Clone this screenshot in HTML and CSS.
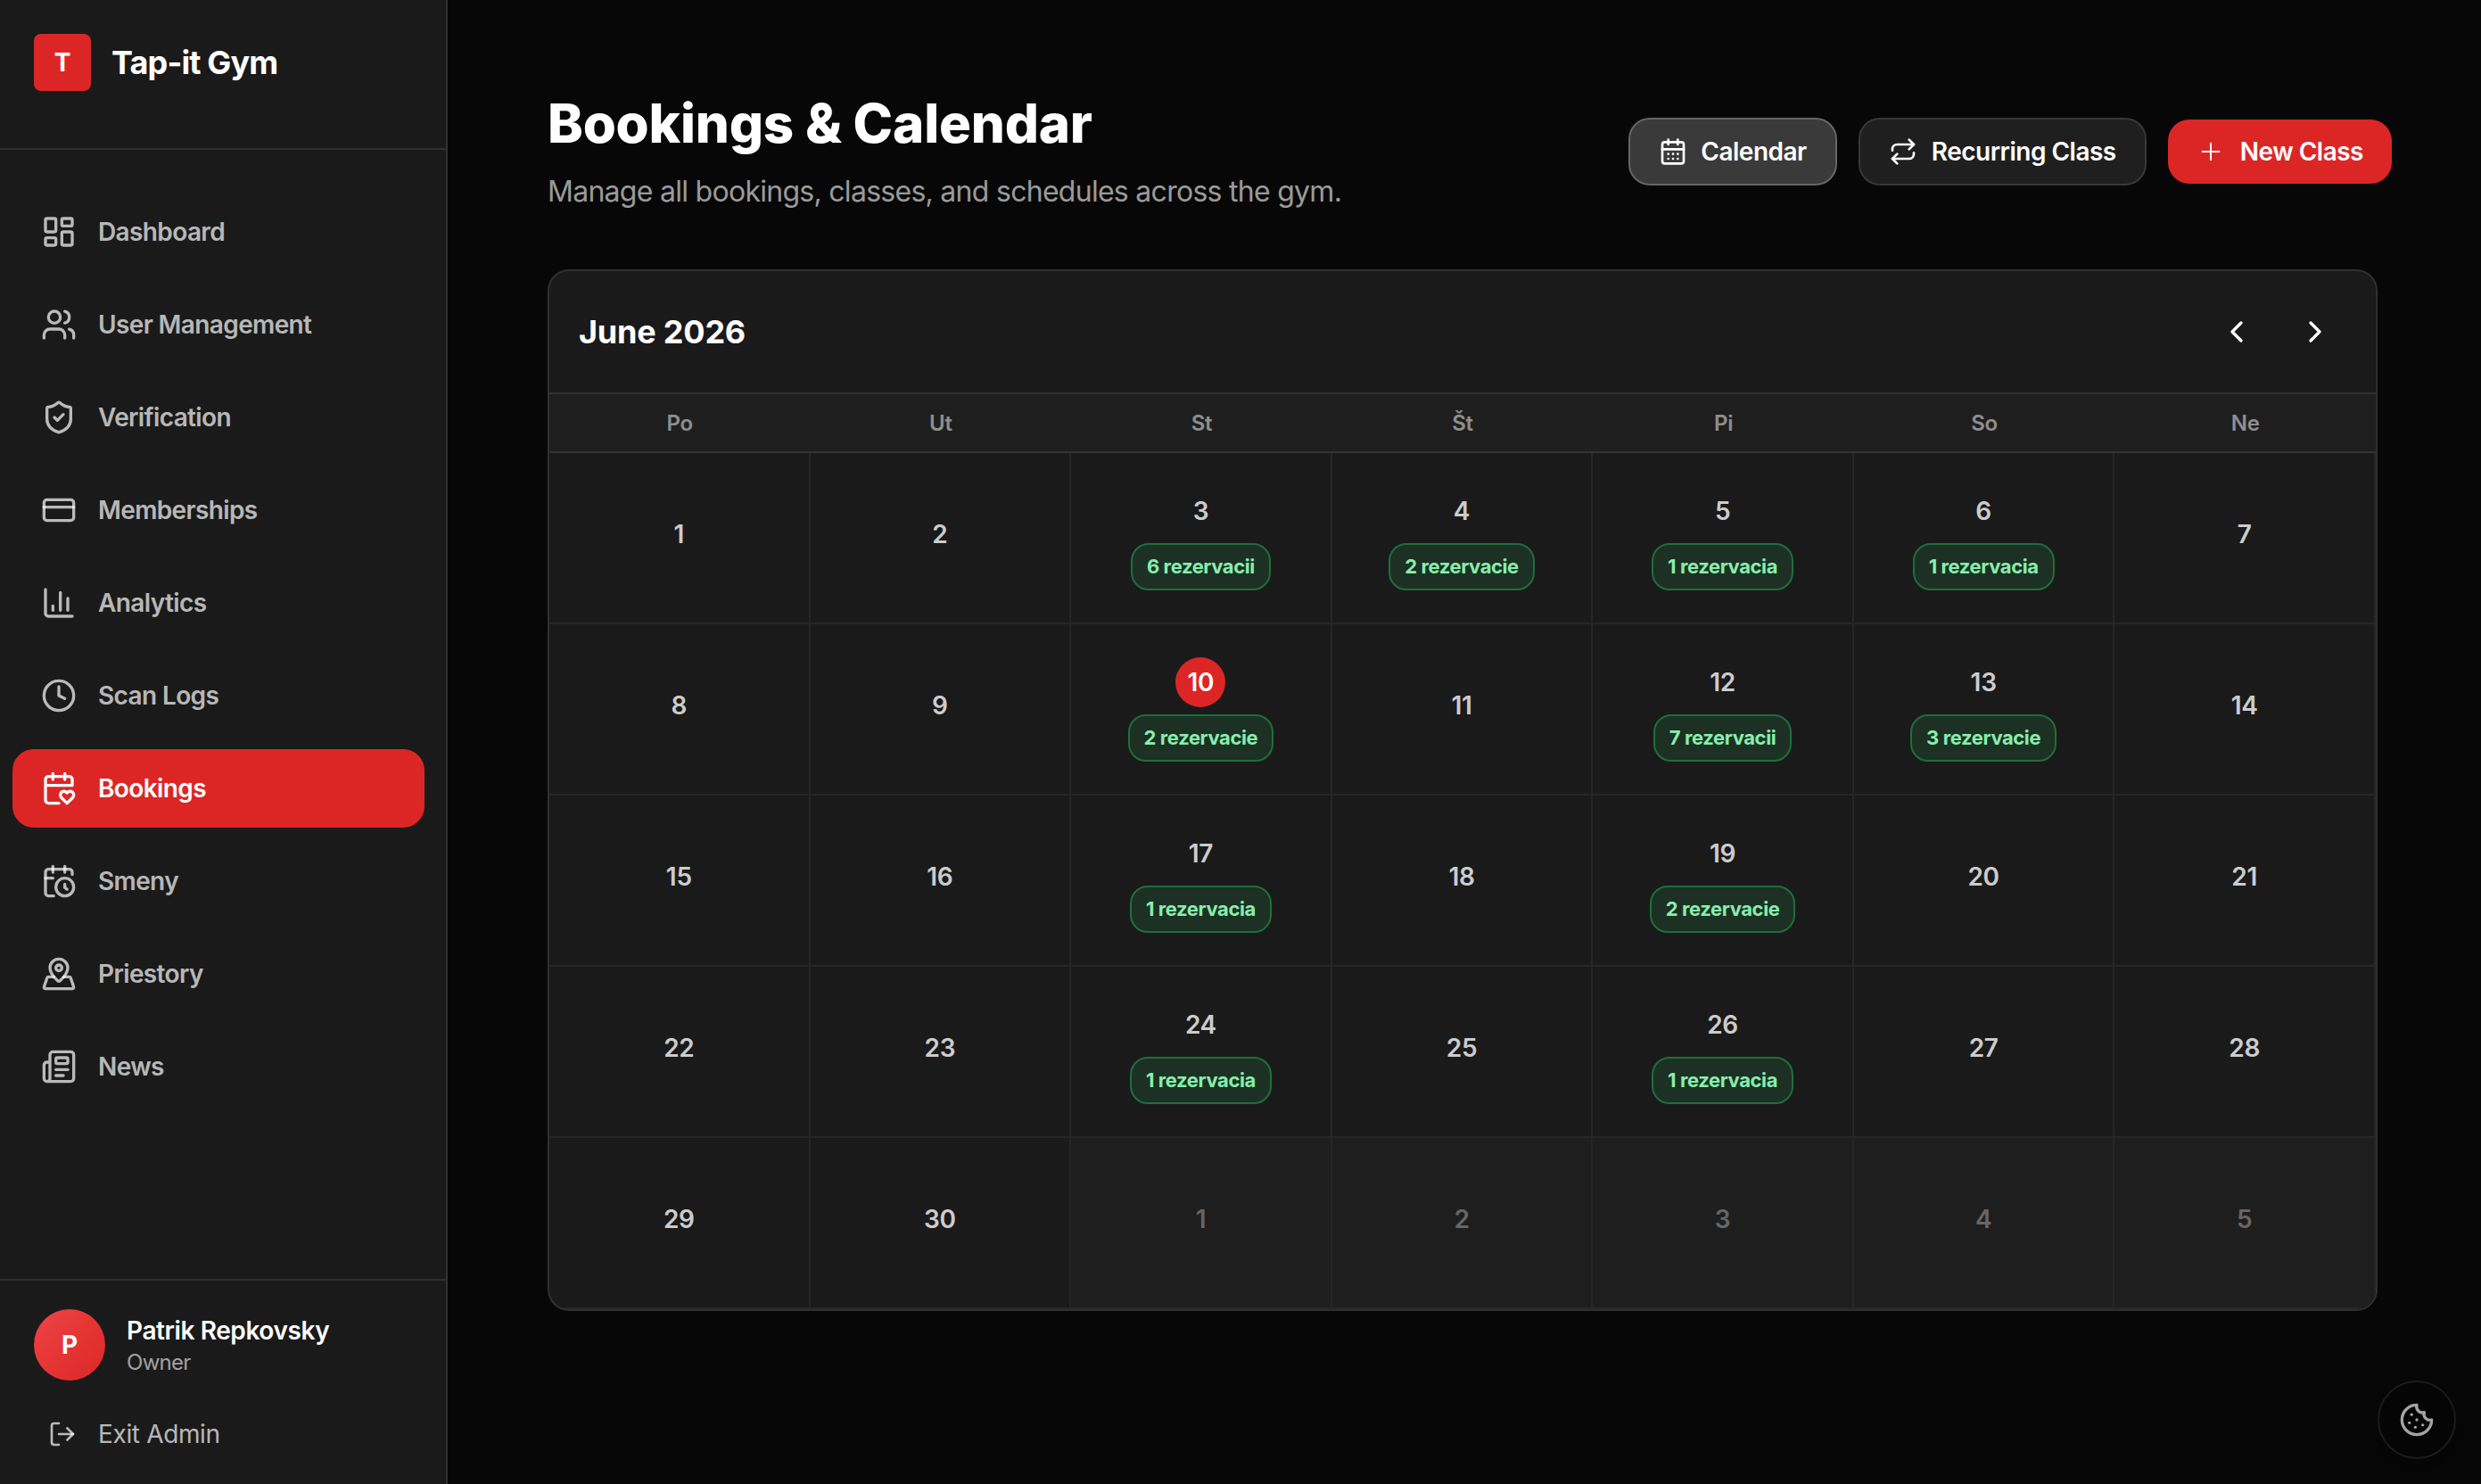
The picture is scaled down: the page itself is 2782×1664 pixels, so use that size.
FILE: index.html
```html
<!DOCTYPE html>
<html lang="sk">
<head>
    <meta charset="UTF-8">
    <meta name="viewport" content="width=device-width, initial-scale=1.0">
    <title>Bookings &amp; Calendar - Tap-it Gym</title>
    <link rel="stylesheet" href="styles.css">
</head>
<body>
    <aside class="sidebar">
        <div class="brand">
            <div class="brand-logo">T</div>
            <span class="brand-name">Tap-it Gym</span>
        </div>

        <nav class="nav">
            <a class="nav-item">
                <svg class="icon" viewBox="0 0 24 24"><rect x="3" y="3" width="7" height="9" rx="1"/><rect x="14" y="3" width="7" height="5" rx="1"/><rect x="14" y="12" width="7" height="9" rx="1"/><rect x="3" y="16" width="7" height="5" rx="1"/></svg>
                <span>Dashboard</span>
            </a>
            <a class="nav-item">
                <svg class="icon" viewBox="0 0 24 24"><path d="M16 21v-2a4 4 0 0 0-4-4H6a4 4 0 0 0-4 4v2"/><circle cx="9" cy="7" r="4"/><path d="M22 21v-2a4 4 0 0 0-3-3.87"/><path d="M16 3.13a4 4 0 0 1 0 7.75"/></svg>
                <span>User Management</span>
            </a>
            <a class="nav-item">
                <svg class="icon" viewBox="0 0 24 24"><path d="M20 13c0 5-3.5 7.5-7.66 8.95a1 1 0 0 1-.67-.01C7.5 20.5 4 18 4 13V6a1 1 0 0 1 1-1c2 0 4.5-1.2 6.24-2.72a1.17 1.17 0 0 1 1.52 0C14.51 3.81 17 5 19 5a1 1 0 0 1 1 1z"/><path d="m9 12 2 2 4-4"/></svg>
                <span>Verification</span>
            </a>
            <a class="nav-item">
                <svg class="icon" viewBox="0 0 24 24"><rect x="2" y="5" width="20" height="14" rx="2"/><path d="M2 10h20"/></svg>
                <span>Memberships</span>
            </a>
            <a class="nav-item">
                <svg class="icon" viewBox="0 0 24 24"><path d="M3 3v16a2 2 0 0 0 2 2h16"/><path d="M18 17V9"/><path d="M13 17V5"/><path d="M8 17v-3"/></svg>
                <span>Analytics</span>
            </a>
            <a class="nav-item">
                <svg class="icon" viewBox="0 0 24 24"><circle cx="12" cy="12" r="10"/><path d="M12 6v6l4 2"/></svg>
                <span>Scan Logs</span>
            </a>
            <a class="nav-item active">
                <svg class="icon" viewBox="0 0 24 24"><path d="M3 10h18V6a2 2 0 0 0-2-2H5a2 2 0 0 0-2 2v14c0 1.1.9 2 2 2h7"/><path d="M8 2v4"/><path d="M16 2v4"/><path d="M21.29 14.7a2.43 2.43 0 0 0-2.65-.52c-.3.12-.57.3-.8.53l-.34.34-.35-.34a2.43 2.43 0 0 0-2.65-.53c-.3.12-.56.3-.79.53-.95.94-1 2.53.2 3.74L17.5 22l3.6-3.55c1.2-1.21 1.14-2.8.19-3.74Z"/></svg>
                <span>Bookings</span>
            </a>
            <a class="nav-item">
                <svg class="icon" viewBox="0 0 24 24"><path d="M21 7.5V6a2 2 0 0 0-2-2H5a2 2 0 0 0-2 2v14a2 2 0 0 0 2 2h3.5"/><path d="M16 2v4"/><path d="M8 2v4"/><path d="M3 10h5"/><path d="M17.5 17.5 16 16.3V14"/><circle cx="16" cy="16" r="6"/></svg>
                <span>Smeny</span>
            </a>
            <a class="nav-item">
                <svg class="icon" viewBox="0 0 24 24"><path d="M18 8c0 3.613-3.869 7.429-5.393 8.795a1 1 0 0 1-1.214 0C9.87 15.429 6 11.613 6 8a6 6 0 0 1 12 0"/><circle cx="12" cy="8" r="2"/><path d="M8.714 14h-3.71a1 1 0 0 0-.948.683l-2.004 6A1 1 0 0 0 3 22h18a1 1 0 0 0 .948-1.316l-2-6a1 1 0 0 0-.949-.684h-3.712"/></svg>
                <span>Priestory</span>
            </a>
            <a class="nav-item">
                <svg class="icon" viewBox="0 0 24 24"><path d="M15 18h-5"/><path d="M18 14h-8"/><path d="M4 22h16a2 2 0 0 0 2-2V4a2 2 0 0 0-2-2H8a2 2 0 0 0-2 2v16a2 2 0 0 1-4 0v-9a2 2 0 0 1 2-2h2"/><rect x="10" y="6" width="8" height="4" rx="1"/></svg>
                <span>News</span>
            </a>
        </nav>

        <div class="sidebar-footer">
            <div class="user">
                <div class="avatar">P</div>
                <div class="user-info">
                    <span class="user-name">Patrik Repkovsky</span>
                    <span class="user-role">Owner</span>
                </div>
            </div>
            <a class="exit">
                <svg class="icon icon-sm" viewBox="0 0 24 24"><path d="M9 21H5a2 2 0 0 1-2-2V5a2 2 0 0 1 2-2h4"/><path d="m16 17 5-5-5-5"/><path d="M21 12H9"/></svg>
                <span>Exit Admin</span>
            </a>
        </div>
    </aside>

    <main class="main">
        <header class="page-header">
            <div>
                <h1 class="page-title">Bookings &amp; Calendar</h1>
                <p class="page-subtitle">Manage all bookings, classes, and schedules across the gym.</p>
            </div>
            <div class="actions">
                <button class="btn btn-active">
                    <svg class="icon icon-sm" viewBox="0 0 24 24"><path d="M8 2v4"/><path d="M16 2v4"/><rect x="3" y="4" width="18" height="18" rx="2"/><path d="M3 10h18"/><path d="M8 14h.01M12 14h.01M16 14h.01M8 18h.01M12 18h.01M16 18h.01"/></svg>
                    <span>Calendar</span>
                </button>
                <button class="btn">
                    <svg class="icon icon-sm" viewBox="0 0 24 24"><path d="m17 2 4 4-4 4"/><path d="M3 11v-1a4 4 0 0 1 4-4h14"/><path d="m7 22-4-4 4-4"/><path d="M21 13v1a4 4 0 0 1-4 4H3"/></svg>
                    <span>Recurring Class</span>
                </button>
                <button class="btn btn-primary">
                    <svg class="icon icon-sm" viewBox="0 0 24 24"><path d="M5 12h14"/><path d="M12 5v14"/></svg>
                    <span>New Class</span>
                </button>
            </div>
        </header>

        <section class="calendar">
            <div class="calendar-header">
                <h2 class="calendar-month">June 2026</h2>
                <div class="calendar-nav">
                    <button class="nav-btn"><svg class="icon" viewBox="0 0 24 24"><path d="m15 18-6-6 6-6"/></svg></button>
                    <button class="nav-btn"><svg class="icon" viewBox="0 0 24 24"><path d="m9 18 6-6-6-6"/></svg></button>
                </div>
            </div>

            <div class="weekdays">
                <span>Po</span><span>Ut</span><span>St</span><span>Št</span><span>Pi</span><span>So</span><span>Ne</span>
            </div>

            <div class="days">
                <div class="day"><span class="num">1</span></div>
                <div class="day"><span class="num">2</span></div>
                <div class="day"><span class="num">3</span><span class="badge">6 rezervacii</span></div>
                <div class="day"><span class="num">4</span><span class="badge">2 rezervacie</span></div>
                <div class="day"><span class="num">5</span><span class="badge">1 rezervacia</span></div>
                <div class="day"><span class="num">6</span><span class="badge">1 rezervacia</span></div>
                <div class="day"><span class="num">7</span></div>

                <div class="day"><span class="num">8</span></div>
                <div class="day"><span class="num">9</span></div>
                <div class="day today"><span class="num">10</span><span class="badge">2 rezervacie</span></div>
                <div class="day"><span class="num">11</span></div>
                <div class="day"><span class="num">12</span><span class="badge">7 rezervacii</span></div>
                <div class="day"><span class="num">13</span><span class="badge">3 rezervacie</span></div>
                <div class="day"><span class="num">14</span></div>

                <div class="day"><span class="num">15</span></div>
                <div class="day"><span class="num">16</span></div>
                <div class="day"><span class="num">17</span><span class="badge">1 rezervacia</span></div>
                <div class="day"><span class="num">18</span></div>
                <div class="day"><span class="num">19</span><span class="badge">2 rezervacie</span></div>
                <div class="day"><span class="num">20</span></div>
                <div class="day"><span class="num">21</span></div>

                <div class="day"><span class="num">22</span></div>
                <div class="day"><span class="num">23</span></div>
                <div class="day"><span class="num">24</span><span class="badge">1 rezervacia</span></div>
                <div class="day"><span class="num">25</span></div>
                <div class="day"><span class="num">26</span><span class="badge">1 rezervacia</span></div>
                <div class="day"><span class="num">27</span></div>
                <div class="day"><span class="num">28</span></div>

                <div class="day"><span class="num">29</span></div>
                <div class="day"><span class="num">30</span></div>
                <div class="day other"><span class="num">1</span></div>
                <div class="day other"><span class="num">2</span></div>
                <div class="day other"><span class="num">3</span></div>
                <div class="day other"><span class="num">4</span></div>
                <div class="day other"><span class="num">5</span></div>
            </div>
        </section>
    </main>

    <button class="cookie-btn">
        <svg class="icon" viewBox="0 0 24 24"><path d="M12 2a10 10 0 1 0 10 10 4 4 0 0 1-5-5 4 4 0 0 1-5-5"/><path d="M8.5 8.5v.01"/><path d="M16 15.5v.01"/><path d="M12 12v.01"/><path d="M11 17v.01"/><path d="M7 14v.01"/></svg>
    </button>
</body>
</html>
```
FILE: styles.css
```css
* {
    box-sizing: border-box;
}
body {
    margin: 0;
    height: 100vh;
    display: flex;
    overflow: hidden;
    background: #070707;
    color: #fff;
    font-family: Inter, "Liberation Sans", sans-serif;
    font-size: 28px;
}
h1, h2, p {
    margin: 0;
}
button {
    font: inherit;
    color: inherit;
    background: none;
    border: none;
    padding: 0;
}
.icon {
    width: 40px;
    height: 40px;
    flex-shrink: 0;
    fill: none;
    stroke: currentColor;
    stroke-width: 2;
    stroke-linecap: round;
    stroke-linejoin: round;
}
.icon-sm {
    width: 32px;
    height: 32px;
}

/* Sidebar */
.sidebar {
    width: 502px;
    flex-shrink: 0;
    display: flex;
    flex-direction: column;
    background: #1a1a1a;
    border-right: 2px solid #303030;
}
.brand {
    height: 168px;
    padding: 38px 38px 0;
    display: flex;
    align-items: flex-start;
    gap: 23px;
    border-bottom: 2px solid #303030;
}
.brand-logo {
    width: 64px;
    height: 64px;
    border-radius: 8px;
    background: #dc2626;
    display: flex;
    align-items: center;
    justify-content: center;
    font-weight: 700;
}
.brand-name {
    font-size: 36px;
    font-weight: 700;
    line-height: 64px;
    letter-spacing: -0.85px;
}
.nav {
    flex: 1;
    padding: 48px 24px 0 14px;
    display: flex;
    flex-direction: column;
    gap: 16px;
}
.nav-item {
    height: 88px;
    padding: 0 32px;
    display: flex;
    align-items: center;
    gap: 24px;
    border-radius: 24px;
    color: rgba(255, 255, 255, 0.7);
    font-weight: 600;
    letter-spacing: -0.62px;
}
.nav-item.active {
    background: #dc2626;
    color: #fff;
}
.sidebar-footer {
    height: 230px;
    padding: 32px 38px 0;
    border-top: 2px solid #303030;
}
.user {
    display: flex;
    align-items: center;
    gap: 24px;
}
.avatar {
    width: 80px;
    height: 80px;
    border-radius: 50%;
    background: linear-gradient(135deg, #ef4444, #dc2626);
    display: flex;
    align-items: center;
    justify-content: center;
    font-weight: 700;
}
.user-info {
    display: flex;
    flex-direction: column;
    padding-top: 2px;
}
.user-name {
    font-weight: 600;
    line-height: 38px;
    letter-spacing: -0.4px;
}
.user-role {
    font-size: 24px;
    line-height: 34px;
    color: rgba(255, 255, 255, 0.6);
    letter-spacing: -0.7px;
}
.exit {
    margin-top: 20px;
    height: 80px;
    padding: 0 16px;
    display: flex;
    align-items: center;
    gap: 24px;
    color: rgba(255, 255, 255, 0.7);
    letter-spacing: -0.35px;
}

/* Page */
.main {
    flex: 1;
    padding: 94px 116px 0 112px;
}
.page-header {
    display: flex;
    justify-content: space-between;
    margin-right: -16px; /* actions reach past the card edge */
    height: 208px;
}
.page-title {
    font-size: 60px;
    font-weight: 800;
    line-height: 88px;
    letter-spacing: -0.2px;
}
.page-subtitle {
    font-size: 32px;
    line-height: 66px;
    color: rgba(255, 255, 255, 0.6);
    letter-spacing: -0.72px;
}
.actions {
    display: flex;
    align-items: center;
    gap: 24px;
    height: 152px;
}
.btn {
    height: 76px;
    padding: 0 32px;
    display: flex;
    align-items: center;
    gap: 16px;
    border: 2px solid #383838;
    border-radius: 24px;
    background: #1f1f1f;
    font-weight: 600;
    letter-spacing: -0.5px;
}
.btn-active {
    gap: 15px;
    background: #3a3a3a;
    border-color: #666;
}
.btn-primary {
    height: 72px;
    gap: 17px;
    border: none;
    background: #dc2626;
}
.btn-primary .icon {
    stroke-width: 1.5;
}

/* Calendar */
.calendar {
    background: #1a1a1a;
    border: 2px solid #303030;
    border-radius: 24px;
    overflow: hidden;
}
.calendar-header {
    height: 138px;
    padding: 0 32px;
    display: flex;
    align-items: center;
    justify-content: space-between;
    border-bottom: 2px solid #303030;
}
.calendar-month {
    padding-left: 1px;
    font-size: 36px;
    font-weight: 700;
    letter-spacing: -0.2px;
}
.calendar-nav {
    display: flex;
    gap: 16px;
}
.nav-btn {
    width: 72px;
    height: 72px;
    display: flex;
    align-items: center;
    justify-content: center;
}
.weekdays {
    height: 66px;
    display: grid;
    grid-template-columns: repeat(7, 1fr);
    align-items: center;
    text-align: center;
    background: #1e1e1e;
    border-bottom: 2px solid #343434;
    color: rgba(255, 255, 255, 0.5);
    font-size: 24px;
    font-weight: 600;
    letter-spacing: -0.3px;
}
.days {
    display: grid;
    grid-template-columns: repeat(7, 1fr);
    grid-auto-rows: 192px;
}
.day {
    display: flex;
    flex-direction: column;
    align-items: center;
    justify-content: center;
    border-right: 2px solid #262626;
    border-bottom: 2px solid #262626;
}
.num {
    min-width: 56px;
    height: 56px;
    margin-bottom: 8px;
    display: flex;
    align-items: center;
    justify-content: center;
    border-radius: 50%;
    color: rgba(255, 255, 255, 0.8);
    font-weight: 600;
    letter-spacing: -0.3px;
}
.today .num {
    background: #dc2626;
    color: #fff;
}
.other {
    background: #1e1e1e;
}
.other .num {
    color: #666;
}
.badge {
    height: 53px;
    padding: 0 16px;
    display: flex;
    align-items: center;
    border: 2px solid #1f6e3c;
    border-radius: 20px;
    background: #1d3024;
    color: #86efac;
    font-size: 22px;
    font-weight: 700;
    letter-spacing: -0.4px;
}

/* Cookie settings, floats over the page */
.cookie-btn {
    position: fixed;
    right: 28px;
    bottom: 28px;
    width: 88px;
    height: 88px;
    display: flex;
    align-items: center;
    justify-content: center;
    border: 2px solid #1c1c1c;
    border-radius: 50%;
    background: #050505;
    box-shadow: 0 12px 40px rgba(0, 0, 0, 0.4);
    color: #a3a3a3;
}
```
